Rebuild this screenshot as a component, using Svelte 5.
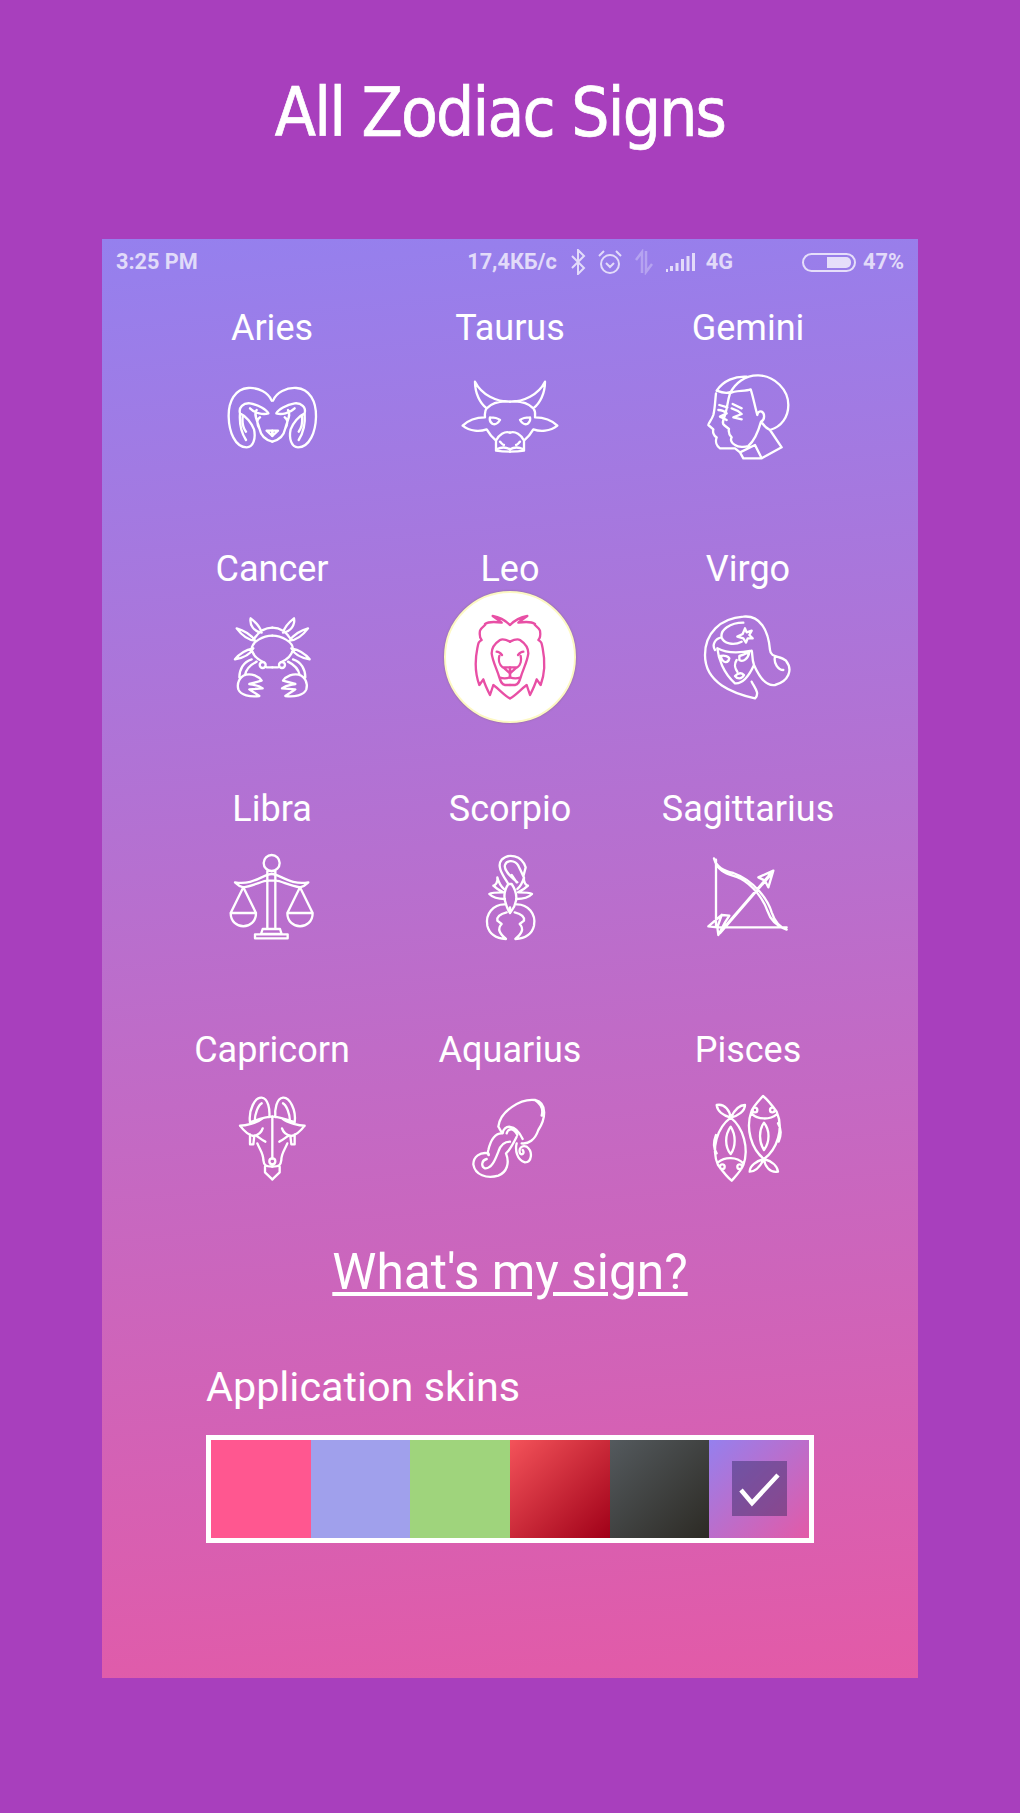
<script>
    // helpers for the symmetric signs, coordinates are in 3x crop pixels
    const mirror = (d, cx) => ({ d, transform: `translate(${cx * 2} 0) scale(-1 1)` });
    const turn = (d, cx, cy) => ({ d, transform: `rotate(180 ${cx} ${cy})` });

    const ariesHalf = "M215 122C205 98 175 82 145 84C105 86 85 125 86 170C87 215 105 262 140 262C160 262 168 235 162 208C155 190 138 168 120 160C115 142 130 128 150 130C175 134 200 150 205 160M120 160C118 185 122 215 138 240M128 170C126 190 130 205 138 215M170 150C160 165 172 180 178 205C182 225 195 240 217 245M150 145C165 160 190 165 205 160M178 205C172 195 168 180 180 172M200 212H217V228Z";
    const taurusHalf = "M930 125C890 125 845 105 825 65C825 100 840 130 860 145C852 155 855 165 855 172C825 172 805 180 788 197C810 215 840 215 860 208C868 222 880 235 888 242C888 255 888 262 888 272C905 275 920 275 930 275M930 125C900 122 875 130 860 145M870 172C880 172 895 176 900 180C895 188 888 195 878 192C872 188 868 180 870 172M888 242C895 225 915 212 930 218M890 268C905 260 920 262 930 268M900 245C905 250 908 255 912 255";
    const crabHalf = "M187 137C160 137 125 155 125 178C130 200 150 212 160 216M187 232H170M187 113C165 113 145 125 130 150M158 225m-9 0a9 9 0 1 0 18 0a9 9 0 1 0 -18 0M122 85C118 105 132 125 155 128C150 110 135 95 122 85ZM80 115C95 135 115 150 135 152C125 135 100 120 80 115ZM75 208C95 205 120 195 130 175C105 180 85 195 75 208ZM125 208C100 215 88 240 88 262M140 215C120 225 108 240 105 255M155 272C145 258 125 250 108 254C88 260 80 280 85 298C92 315 120 322 148 318C138 310 128 305 118 298L158 295C145 285 130 285 118 282Z";
    const leoHalf = "M900 105C885 90 870 82 848 78C858 85 868 92 875 98C855 95 835 95 825 102C830 105 815 110 810 122C808 135 810 145 815 150C805 155 805 160 802 175C795 210 795 250 808 285L820 268C825 285 835 305 840 315L850 285C870 300 885 318 900 325M900 155C890 150 880 145 870 150C855 160 845 175 845 190C848 215 860 235 868 262C872 275 875 283 885 285H900M860 185C865 185 872 190 876 195M868 198C865 210 868 225 878 232M880 232H900V250ZM900 250V262C890 266 878 266 868 262";
    const libraHalf = "M185 105C160 105 130 140 75 130C80 135 90 143 100 145C130 140 160 125 172 125M100 145L62 222H138ZM62 222C62 275 138 275 138 222";
    const capHalf = "M157 95C135 95 110 105 90 112C85 75 105 36 125 38C145 40 150 75 148 96M104 108C105 85 115 60 125 55M60 122C75 122 110 115 128 100M60 122C72 138 85 150 100 153C115 150 125 140 128 130M90 148V178H100L103 152M136 170C125 165 115 155 108 152M112 175C120 195 130 205 130 225C132 240 135 245 157 245M135 245V262L157 283M157 220C145 220 145 238 157 238";
    const fish = "M122 98C82 128 62 190 84 240C95 255 110 275 125 287C140 270 155 255 160 240C178 190 160 128 122 98ZM122 98C100 92 82 78 80 60C105 55 120 78 122 98C132 78 148 60 165 60C165 78 145 92 122 98ZM122 125C104 150 104 185 122 207C138 185 138 150 122 125ZM84 232C105 215 140 215 160 235M90 245a7 7 0 1 0 14 0a7 7 0 1 0 -14 0M142 245a7 7 0 1 0 14 0a7 7 0 1 0 -14 0M78 150C70 170 70 190 80 205";
    const scorpioSide = "M882 150C875 145 865 130 862 115C865 130 855 140 850 140C860 150 870 155 880 160C865 160 845 160 838 165C850 178 870 180 885 180M885 196C850 195 825 225 832 260C838 285 860 298 888 300C870 285 860 270 875 255L862 245C860 235 870 225 890 220";

    const signs = [
        { name: "Aries", box: "66 18", parts: [mirror(ariesHalf, 217), { d: ariesHalf }] },
        { name: "Taurus", box: "780 18", parts: [mirror(taurusHalf, 930), { d: taurusHalf }] },
        { name: "Gemini", box: "54 18", parts: [{ d: "M150 100C165 70 195 45 235 46C285 48 325 90 325 135C325 170 305 200 270 210C260 205 250 195 243 185C255 180 255 160 245 155C238 152 232 158 232 165C225 140 218 105 212 88C195 95 165 90 150 100C142 125 142 145 135 165C130 180 125 190 132 195L147 207C145 215 148 225 155 232C150 240 155 250 165 255C175 262 195 262 205 258C220 245 232 225 243 185M270 210L305 262L245 295H190L180 277L225 255L245 295M110 92C130 62 165 48 200 50M110 92C130 100 145 100 155 95M108 100C105 125 105 145 100 165C95 180 85 190 85 195L100 208C98 215 100 228 110 232C105 245 110 258 120 265H165L180 277M115 150C125 150 135 155 140 160L120 170L140 180M155 145C165 148 178 155 185 162L160 172L185 178M118 135L142 142M158 132L185 145" }] },
        { name: "Cancer", box: "36 51", parts: [mirror(crabHalf, 187), { d: crabHalf }] },
        { name: "Leo", box: "750 51", selected: true, parts: [mirror(leoHalf, 900), { d: leoHalf }] },
        { name: "Virgo", box: "54 21", parts: [{ d: "M225 295C160 280 75 250 75 165C75 100 120 55 190 50C240 45 265 90 270 150C272 175 300 165 318 182C340 210 325 245 285 255C255 260 235 225 222 195C215 175 218 160 215 152M190 68C150 68 120 90 125 112C130 130 160 138 185 125M285 170C280 190 295 210 310 210M105 150C95 135 105 115 125 112M112 145C115 175 130 220 165 250C185 252 205 232 222 195M112 145C140 160 175 160 215 152M122 168C135 165 145 170 148 175C145 190 128 192 122 168ZM178 168C190 165 200 160 208 156C205 175 190 188 178 180ZM170 180C160 195 168 210 172 215M165 228C175 218 185 218 192 225C185 238 172 238 165 228ZM215 245C225 265 240 280 225 295M195 85L200 97L215 92L208 105L218 115L203 115L198 128L190 115L172 110L188 102Z" }] },
        { name: "Libra", box: "36 24", parts: [mirror(libraHalf, 185), { d: libraHalf }, { d: "M161 72a24 24 0 1 0 48 0a24 24 0 1 0 -48 0M172 95V270M196 95V270M158 270H210L215 285H153ZM135 286H233V298H135ZM172 125H196" }] },
        { name: "Scorpio", box: "750 24", parts: [{ d: "M895 135C880 110 858 82 875 62C895 42 935 48 947 85L940 112C935 100 930 90 925 80C915 62 890 62 885 78C880 95 905 115 922 130M905 108L920 130M895 135C885 150 880 165 885 185C890 205 895 215 900 222C905 215 915 205 918 185C922 165 915 150 905 135ZM900 222V205" }, mirror(scorpioSide, 902), { d: scorpioSide }] },
        { name: "Sagittarius", box: "24 24", parts: [{ d: "M78 62V265H290M72 58C80 85 100 95 130 102C195 125 235 185 245 220C255 250 270 265 290 272C260 262 240 240 232 215C220 180 190 140 150 118C120 105 85 105 72 58ZM85 285L245 100M90 283L240 110M250 95L205 115L225 125L235 145ZM55 262L95 228L118 230L105 250L85 288L82 265ZM95 228L82 265" }] },
        { name: "Capricorn", box: "6 9", parts: [mirror(capHalf, 157), { d: capHalf }, { d: "M157 95V220" }] },
        { name: "Aquarius", box: "720 9", parts: [{ d: "M835 125C840 80 900 40 945 45C985 55 975 105 955 135C945 165 925 178 905 175M945 45C965 58 970 75 965 92M835 125C840 132 842 140 848 145C850 120 885 112 908 162M860 145C865 128 882 128 892 150M845 145C825 145 812 165 805 195C800 210 810 215 805 205C780 200 760 215 760 238C765 270 800 282 835 272C860 262 870 235 858 205C870 195 880 175 890 155M800 222C785 225 782 245 795 250C815 252 825 225 835 200C840 185 850 170 870 170M890 175C885 195 890 225 915 232C935 232 940 200 920 185C905 180 895 190 900 205C905 212 915 205 908 195" }] },
        { name: "Pisces", box: "24 9", parts: [{ d: fish }, turn(fish, 172, 160)] },
    ];

    const skins = ["pink", "lilac", "green", "red", "dark", "current"];
</script>

<main class="page">
    <header class="title-bar">
        <h1>All Zodiac Signs</h1>
    </header>

    <section class="phone">
        <div class="status">
            <span>3:25 PM</span>
            <div class="network">
                <span class="speed">17,4КБ/с</span>
                <svg class="ic" width="16" height="26" viewBox="0 0 16 26"><path d="M2 7l12 12-6 6V1l6 6L2 19" fill="none" stroke="currentColor" stroke-width="2"/></svg>
                <svg class="ic" width="26" height="26" viewBox="0 0 26 26"><path d="M13 6a9 9 0 1 0 0 18a9 9 0 1 0 0-18M9 14l4 4 4-4M2 7l5-5M24 7l-5-5" fill="none" stroke="currentColor" stroke-width="2"/></svg>
                <svg class="ic dim" width="20" height="26" viewBox="0 0 20 26"><path d="M8 24V3L2 11M12 2v21l6-8" fill="none" stroke="currentColor" stroke-width="2.500"/></svg>
                <svg class="ic" width="30" height="20" viewBox="0 0 30 20"><path d="M1 18.500h2M6.500 19V14M12 19V11M17.500 19V7M23 19V4M28.500 19V1" fill="none" stroke="currentColor" stroke-width="3"/></svg>
                <span>4G</span>
            </div>
            <div class="power">
                <span class="battery"><i></i></span>
                <span>47%</span>
            </div>
        </div>

        <div class="signs">
            {#each signs as sign}
                <div class="sign">
                    <span class="label">{sign.name}</span>
                    <div class="badge" class:selected={sign.selected}>
                        <svg width="100" height="100" viewBox="{sign.box} 300 300" fill="none" stroke-width="7" stroke-linejoin="round" stroke-linecap="round">
                            {#each sign.parts as part}
                                <path d={part.d} transform={part.transform} />
                            {/each}
                        </svg>
                    </div>
                </div>
            {/each}
        </div>

        <a class="whats" href="#sign">What's my sign?</a>

        <div class="skins">
            <h2>Application skins</h2>
            <div class="swatches">
                {#each skins as skin}
                    <div class="swatch {skin}">
                        {#if skin === "current"}
                            <div class="tick">
                                <svg width="55" height="55" viewBox="0 0 55 55"><path d="M9 29l11 13L46 14" fill="none" stroke="#fff" stroke-width="4.500"/></svg>
                            </div>
                        {/if}
                    </div>
                {/each}
            </div>
        </div>
    </section>
</main>

<style>
    :global(body) {
        background: #a83fbd;
    }

    .page {
        height: 1813px;
        display: flex;
        flex-direction: column;
        align-items: center;
        font-family: Roboto, sans-serif;
        color: #fff;
    }

    .title-bar {
        height: 239px;
        box-sizing: border-box;
        display: flex;
        align-items: center;
        justify-content: center;
        padding: 0 20px 13px 0;
        width: 100%;
    }

    h1 {
        margin: 0;
        font-family: "DejaVu Sans", sans-serif;
        font-stretch: condensed;
        font-weight: 400;
        font-size: 67px;
        letter-spacing: -1.800px;
        -webkit-text-stroke: 0.700px #fff;
    }

    .phone {
        width: 816px;
        height: 1439px;
        display: flex;
        flex-direction: column;
        background: linear-gradient(175deg, #9580ee 0%, #e35aa7 100%);
    }

    .status {
        height: 69px;
        box-sizing: border-box;
        padding: 9px 14px 0;
        display: flex;
        align-items: flex-start;
        font-size: 21.700px;
        font-weight: 700;
        line-height: 28px;
        color: rgba(255, 255, 255, 0.72);
    }

    .network {
        margin-left: auto;
        display: flex;
        align-items: center;
        gap: 11px;
    }

    .speed {
        margin-right: 2px;
    }

    .ic {
        display: block;
    }

    .dim {
        opacity: 0.4;
    }

    .power {
        margin-left: 69px;
        display: flex;
        align-items: center;
        gap: 7px;
    }

    .battery {
        width: 54px;
        height: 19px;
        box-sizing: border-box;
        border: 2px solid rgba(255, 255, 255, 0.75);
        border-radius: 10px;
        display: flex;
        justify-content: flex-end;
        padding: 2px 3px;
    }

    .battery i {
        width: 24px;
        background: rgba(255, 255, 255, 0.75);
        border-radius: 0 5px 5px 0;
    }

    .signs {
        display: grid;
        grid-template-columns: repeat(3, 238px);
        row-gap: 82.670px;
        justify-content: center;
    }

    .sign {
        display: flex;
        flex-direction: column;
        align-items: center;
        gap: 18px;
    }

    .label {
        font-size: 36px;
        line-height: 40px;
    }

    .badge {
        width: 100px;
        height: 100px;
        display: flex;
        align-items: center;
        justify-content: center;
        stroke: #fff;
        border-radius: 50%;
        flex: none;
    }

    .badge svg {
        flex: none;
    }

    .selected {
        width: 132px;
        height: 132px;
        margin: -16px;
        box-sizing: border-box;
        background: #fff;
        border: 2px solid #fdf8c4;
        box-shadow: 0 0 2px rgba(120, 110, 90, 0.7);
        stroke: #e84fa5;
    }

    .whats {
        margin-top: 54px;
        align-self: center;
        color: #fff;
        font-size: 49.700px;
        line-height: 60px;
    }

    .skins {
        margin: 61px 0 0 104px;
        width: 608px;
    }

    h2 {
        margin: 0 0 24px;
        font-size: 41.300px;
        font-weight: 400;
        line-height: 48px;
    }

    .swatches {
        display: grid;
        grid-template-columns: repeat(6, 1fr);
        height: 108px;
        box-sizing: border-box;
        border: 5px solid #fff;
    }

    .swatch {
        display: flex;
        align-items: center;
        justify-content: center;
    }

    .pink { background: #ff5790; }
    .lilac { background: #a0a0ec; }
    .green { background: #9fd47c; }
    .red { background: linear-gradient(135deg, #f4535a, #a00018); }
    .dark { background: linear-gradient(135deg, #545a5e, #2c2a24); }
    .current { background: linear-gradient(135deg, #9580ee, #e35aa7); }

    .tick {
        width: 55px;
        height: 55px;
        background: rgba(30, 30, 80, 0.4);
    }

    .tick svg {
        display: block;
    }
</style>
